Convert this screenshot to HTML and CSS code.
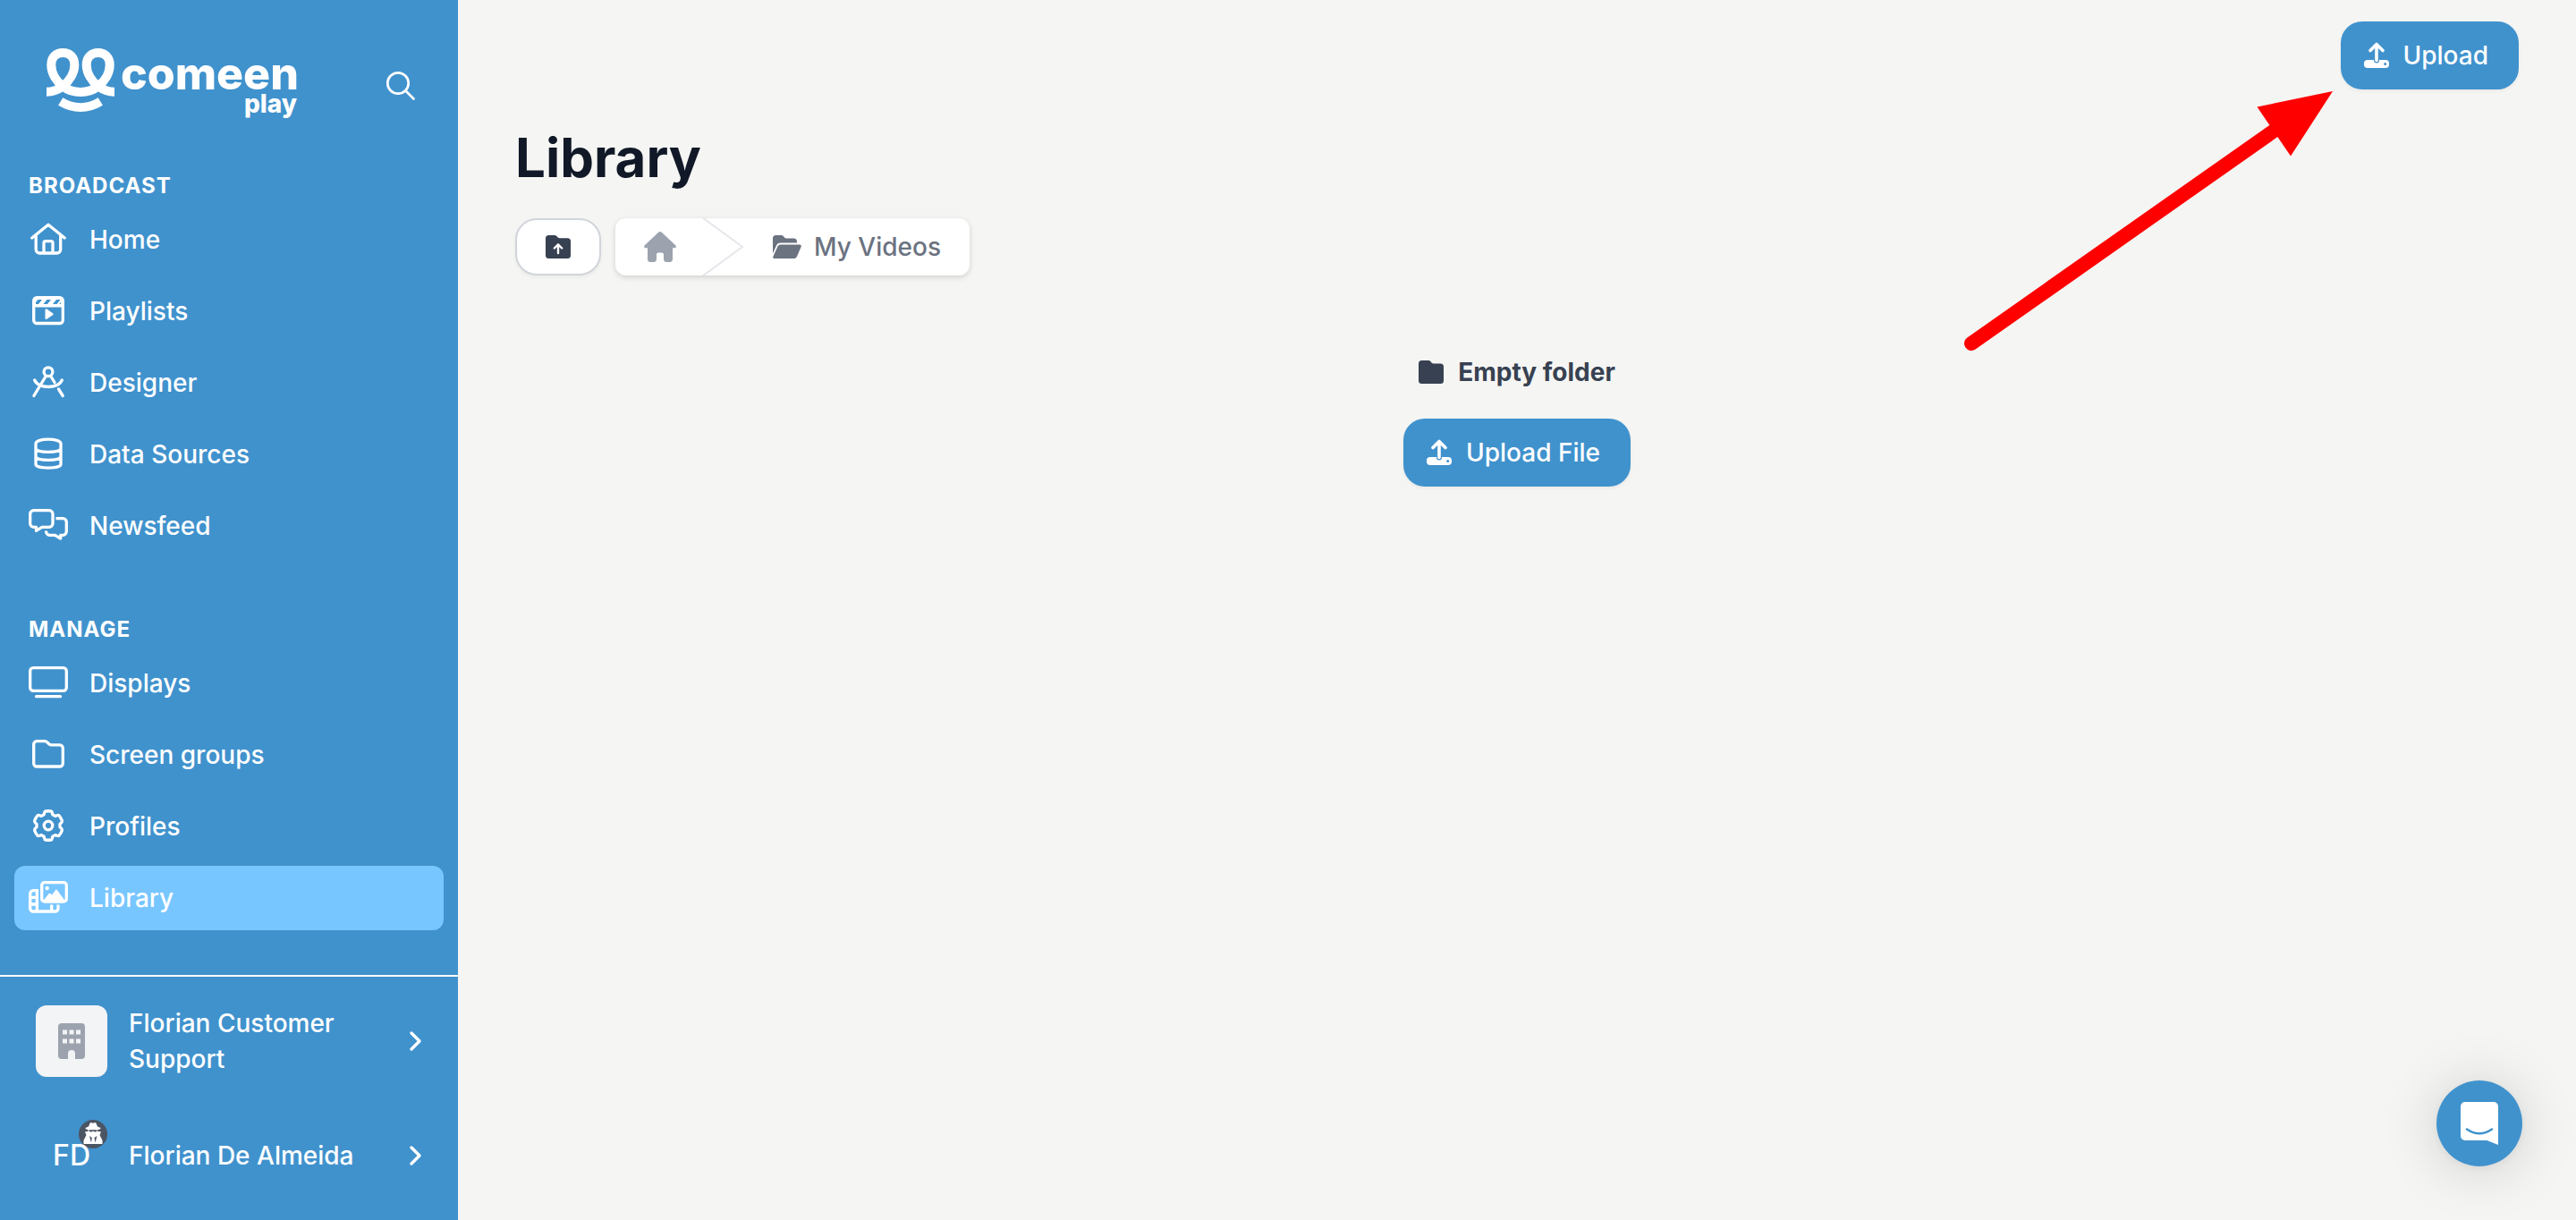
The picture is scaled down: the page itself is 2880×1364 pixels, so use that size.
FILE: index.html
```html
<!DOCTYPE html>
<html lang="en">
<head>
    <meta charset="UTF-8">
    <meta name="viewport" content="width=device-width, initial-scale=1.0">
    <title>Library - Comeen Play</title>
    <link rel="stylesheet" href="styles.css">
</head>
<body>
    <aside class="sidebar">
        <div class="sidebar-header">
            <a href="#" class="logo" aria-label="Comeen Play">
                <svg width="284" height="88" viewBox="52 52 284 88">
                    <g fill="none" stroke="#fff" stroke-width="10">
                        <path d="M52 102.7C58 102.7 64 101 70.3 96.5C77 91 83.3 82 83.3 72.5C83.3 64 78 59 70.3 59S57.3 64 57.3 72.5C57.3 82 63 91 70.3 96.5C76 101 83 103 90 103C97 103 104 101 109.7 96.5C117 91 122.7 82 122.7 72.5C122.7 64 117 59 109.7 59S96.7 64 96.7 72.5C96.7 82 103 91 109.7 96.5C116 101 122 102.7 128 102.7"/>
                        <path d="M67.7 113.5C82 122.2 98 122.2 112.3 113.5"/>
                    </g>
                    <text class="logo-name" x="135" y="100">comeen</text>
                    <text class="logo-product" x="332" y="126" text-anchor="end">play</text>
                </svg>
            </a>
            <button class="search-button" aria-label="Search">
                <svg width="32" height="32" viewBox="0 0 32 32" fill="none" stroke="#fff" stroke-width="2.7" stroke-linecap="round">
                    <circle cx="13" cy="13" r="11.7"/>
                    <path d="M21.5 21.5L30.5 30.5"/>
                </svg>
            </button>
        </div>

        <nav class="nav-group">
            <h2>Broadcast</h2>
            <a href="#" class="nav-item">
                <svg class="nav-icon" viewBox="0 0 44 38">
                    <path d="M3.8 17L22 2.2L40.2 17M8.2 14V30a4 4 0 0 0 4 4H31.7a4 4 0 0 0 4-4V14M17 34V22.6a2 2 0 0 1 2-2H25a2 2 0 0 1 2 2V34"/>
                </svg>
                Home
            </a>
            <a href="#" class="nav-item">
                <svg class="nav-icon" viewBox="0 0 44 38">
                    <rect x="5.7" y="3.7" width="32.6" height="28.8" rx="3.5"/>
                    <path class="solid" fill-rule="evenodd" d="M5 4H39V14.5H5ZM8 11V9L10.5 6H15L11 11ZM16.5 11L20.5 6H25L21 11ZM27 11L31 6H35.5L31.5 11ZM34.5 11L36.2 8.5V11Z"/>
                    <path class="solid" d="M18.5 17.5a1.2 1.2 0 0 1 1.9-1L27 21.2a1.2 1.2 0 0 1 0 2L20.4 27.8a1.2 1.2 0 0 1-1.9-1Z"/>
                </svg>
                Playlists
            </a>
            <a href="#" class="nav-item">
                <svg class="nav-icon" viewBox="0 0 44 38">
                    <circle cx="22" cy="6.7" r="4.9"/>
                    <path d="M19 12L5.9 33.5M25 12L29 18.5M33.5 26L38.2 33.5M6.7 16C11 26 33 26 37.3 16"/>
                </svg>
                Designer
            </a>
            <a href="#" class="nav-item">
                <svg class="nav-icon" viewBox="0 0 44 38">
                    <path d="M8 7C8 .5 36 .5 36 7V30C36 35.4 8 35.4 8 30ZM8 13C11 17.4 33 17.4 36 13M8 22C11 26.4 33 26.4 36 22"/>
                </svg>
                Data Sources
            </a>
            <a href="#" class="nav-item">
                <svg class="nav-icon" viewBox="0 0 44 38">
                    <path d="M5.7 1.7H23a4 4 0 0 1 4 4V16.3a4 4 0 0 1-4 4H15L8.5 24.3V20.3H5.7a4 4 0 0 1-4-4V5.7a4 4 0 0 1 4-4Z"/>
                    <path stroke-linecap="butt" d="M30.5 10.7H38.3a4 4 0 0 1 4 4V25.3a4 4 0 0 1-4 4H35.7V33L29.5 29.3H23.5a4 4 0 0 1-4-4V24.5"/>
                </svg>
                Newsfeed
            </a>
        </nav>

        <nav class="nav-group">
            <h2>Manage</h2>
            <a href="#" class="nav-item">
                <svg class="nav-icon" viewBox="0 0 44 38">
                    <rect x="1.7" y="1.7" width="40.6" height="25.6" rx="3.5"/>
                    <path d="M8.5 33.7H35.5"/>
                </svg>
                Displays
            </a>
            <a href="#" class="nav-item">
                <svg class="nav-icon" viewBox="0 0 44 38">
                    <path d="M9.2 3.7H18a4 4 0 0 1 2.8 1.2L22.5 6.7a4 4 0 0 0 2.8 1.2H34.8a3.5 3.5 0 0 1 3.5 3.5V28.5a3.5 3.5 0 0 1-3.5 3.5H9.2a3.5 3.5 0 0 1-3.5-3.5V7.2a3.5 3.5 0 0 1 3.5-3.5Z"/>
                </svg>
                Screen groups
            </a>
            <a href="#" class="nav-item">
                <svg class="nav-icon" viewBox="0 0 44 38">
                    <g transform="translate(22 18)">
                        <circle r="4.8"/>
                        <path d="M-3-16Q0-16.5 3-16Q4.2-15.8 4.4-14L4.8-12.3L7.8-10.6L9.5-11.2Q11.3-11.9 12.2-11Q14.2-8.5 15.3-5.6Q15.7-4.5 14.5-3.2L13-1.7V1.7L14.5 3.2Q15.7 4.5 15.3 5.6Q14.2 8.5 12.2 11Q11.3 11.9 9.5 11.2L7.8 10.6L4.8 12.3L4.4 14Q4.2 15.8 3 16Q0 16.5-3 16Q-4.2 15.8-4.4 14L-4.8 12.3L-7.8 10.6L-9.5 11.2Q-11.3 11.9-12.2 11Q-14.2 8.5-15.3 5.6Q-15.7 4.5-14.5 3.2L-13 1.7V-1.7L-14.5-3.2Q-15.7-4.5-15.3-5.6Q-14.2-8.5-12.2-11Q-11.3-11.9-9.5-11.2L-7.8-10.6L-4.8-12.3L-4.4-14Q-4.2-15.8-3-16Z"/>
                    </g>
                </svg>
                Profiles
            </a>
            <a href="#" class="nav-item active">
                <svg class="nav-icon" viewBox="0 0 44 38">
                    <rect x="14.7" y="1.7" width="27.6" height="21.3" rx="3"/>
                    <circle class="solid" cx="20.7" cy="8" r="2.2"/>
                    <path class="solid" d="M16 22.5L22.5 14.3Q23.7 13 24.8 14.3L26 15.7L30 10.2Q31 9 32 10.2L41 22.5Z"/>
                    <path stroke-linecap="butt" d="M11 10.7H5.2a3.5 3.5 0 0 0-3.5 3.5V30.5a3.5 3.5 0 0 0 3.5 3.5H29.5a3.5 3.5 0 0 0 3.5-3.5V26.5M9.4 10V34M2 18.3H9.4M2 26H9.4M25.7 26.5V34"/>
                </svg>
                Library
            </a>
        </nav>

        <div class="sidebar-footer">
            <a href="#" class="account">
                <span class="avatar avatar-org">
                    <svg width="30" height="40" viewBox="0 0 30 40">
                        <path fill="#9ca3af" fill-rule="evenodd" d="M4 0H26a4 4 0 0 1 4 4V36a4 4 0 0 1-4 4H19V34a4 4 0 0 0-8 0V40H4a4 4 0 0 1-4-4V4a4 4 0 0 1 4-4ZM5 7.5V12.5H10V7.5ZM12.5 7.5V12.5H17.5V7.5ZM20 7.5V12.5H25V7.5ZM5 17.5V22.5H10V17.5ZM12.5 17.5V22.5H17.5V17.5ZM20 17.5V22.5H25V17.5Z"/>
                    </svg>
                </span>
                <span class="account-name">Florian Customer Support</span>
                <svg class="chevron" viewBox="0 0 14 22"><path d="M2 2L11 11L2 20"/></svg>
            </a>
            <a href="#" class="account">
                <span class="avatar">
                    <span class="badge">
                        <svg width="32" height="32" viewBox="0 0 32 32">
                            <path fill="#fff" d="M11 7.5L12.5 4Q13 2.8 14.3 3.2L16 3.7L17.7 3.2Q19 2.8 19.5 4L21 7.5L24.5 9Q25 10 23 10.7L21.5 11.2H10.5L9 10.7Q7 10 7.5 9Z"/>
                            <path fill="#fff" d="M10.5 11H21V13H24.5Q25 14 23.5 17L26.5 23V27H5.5V23L8.5 17Q7 14 7.5 13H10.5Z"/>
                            <path fill="#4b5563" d="M11.5 11.3H20.5V12.5Q18.5 14.2 16.5 12.7H15.5Q13.5 14.2 11.5 12.5ZM12 18L14.8 20L14 25.5ZM20.5 18L17.5 20L18.5 25.5Z"/>
                        </svg>
                    </span>
                    <span class="initials">FD</span>
                </span>
                <span class="account-name">Florian De Almeida</span>
                <svg class="chevron" viewBox="0 0 14 22"><path d="M2 2L11 11L2 20"/></svg>
            </a>
        </div>
    </aside>

    <main>
        <div class="actions">
            <button class="primary-button">
                <svg class="upload-icon" viewBox="0 0 28 30">
                    <rect x="0" y="20" width="28" height="9" rx="4" fill="#fff"/>
                    <circle cx="23.7" cy="24.5" r="1.5" fill="#4092cd"/>
                    <path d="M14 16V20.5" fill="none" stroke="#4092cd" stroke-width="6" stroke-linecap="round"/>
                    <path d="M14 3V20.5M7 9.5L14 2.5L21 9.5" fill="none" stroke="#fff" stroke-width="3.6" stroke-linecap="round" stroke-linejoin="round"/>
                </svg>
                Upload
            </button>
        </div>

        <h1>Library</h1>

        <div class="toolbar">
            <button class="up-button" aria-label="Parent folder">
                <svg width="28" height="26" viewBox="0 0 28 26">
                    <path fill="#374151" d="M3.5 0H10a3 3 0 0 1 2.3 1L13.5 2.3a3 3 0 0 0 2.3 1H24.5A3.5 3.5 0 0 1 28 6.8V22.5A3.5 3.5 0 0 1 24.5 26H3.5A3.5 3.5 0 0 1 0 22.5V3.5A3.5 3.5 0 0 1 3.5 0Z"/>
                    <path d="M14 20V11M9.8 14.5L14 10.3L18.2 14.5" fill="none" stroke="#fff" stroke-width="2.4" stroke-linecap="round" stroke-linejoin="round"/>
                </svg>
            </button>
            <nav class="breadcrumb" aria-label="Breadcrumb">
                <a href="#" class="crumb-home" aria-label="Root folder">
                    <svg width="36" height="34" viewBox="0 0 36 34">
                        <path fill="#9ca3af" d="M18 0Q19 0 19.8 .7L35.3 15.2Q36.5 16.5 35.5 17.8Q35 18.3 34 18.3H32V30.5A3.5 3.5 0 0 1 28.5 34H25.5A3.5 3.5 0 0 1 22 30.5V25.5A2 2 0 0 0 20 23.5H16A2 2 0 0 0 14 25.5V30.5A3.5 3.5 0 0 1 10.5 34H7.5A3.5 3.5 0 0 1 4 30.5V18.3H2Q1 18.3 .5 17.8Q-.5 16.5 .7 15.2L16.2 .7Q17 0 18 0Z"/>
                    </svg>
                </a>
                <svg class="crumb-separator" viewBox="0 0 48 64"><path d="M1 -1L46 32L1 65"/></svg>
                <a href="#" class="crumb">
                    <svg width="32" height="26" viewBox="0 0 32 26">
                        <path fill="#6b7280" d="M3.5 0H9.5a3 3 0 0 1 2.3 1L13 2.5a3 3 0 0 0 2.3 1H23.5A3.3 3.3 0 0 1 27 7V8.5H8.5A5 5 0 0 0 4 11.5L0 20.5V3.5A3.5 3.5 0 0 1 3.5 0Z"/>
                        <path fill="#6b7280" d="M8.5 10.5H30Q32.5 10.7 31.6 13L27 23.8Q26 26 24 26H1.5Q-.5 25.7 .5 23.5L5.5 12.5Q6.5 10.5 8.5 10.5Z"/>
                    </svg>
                    My Videos
                </a>
            </nav>
        </div>

        <section class="empty-folder">
            <p>
                <svg width="28" height="26" viewBox="0 0 28 26">
                    <path fill="#374151" d="M3.5 0H11a3 3 0 0 1 2.3 1L14.5 2.5a3 3 0 0 0 2.3 1H24.5A3.5 3.5 0 0 1 28 7V22.5A3.5 3.5 0 0 1 24.5 26H3.5A3.5 3.5 0 0 1 0 22.5V3.5A3.5 3.5 0 0 1 3.5 0Z"/>
                </svg>
                Empty folder
            </p>
            <button class="primary-button">
                <svg class="upload-icon" viewBox="0 0 28 30">
                    <rect x="0" y="20" width="28" height="9" rx="4" fill="#fff"/>
                    <circle cx="23.7" cy="24.5" r="1.5" fill="#4092cd"/>
                    <path d="M14 16V20.5" fill="none" stroke="#4092cd" stroke-width="6" stroke-linecap="round"/>
                    <path d="M14 3V20.5M7 9.5L14 2.5L21 9.5" fill="none" stroke="#fff" stroke-width="3.6" stroke-linecap="round" stroke-linejoin="round"/>
                </svg>
                Upload File
            </button>
        </section>
    </main>

    <!-- arrow pointing at the upload button -->
    <svg class="arrow" viewBox="0 0 420 300">
        <path d="M12 286L352 47" stroke="#f00" stroke-width="16" stroke-linecap="round"/>
        <path fill="#f00" d="M416 4L331.5 21.5L369 76.5Z"/>
    </svg>

    <button class="chat-button" aria-label="Open chat">
        <svg width="42" height="48" viewBox="0 0 42 48">
            <path fill="#fff" d="M5 0H37a5 5 0 0 1 5 5V48L29.5 43H5a5 5 0 0 1-5-5V5a5 5 0 0 1 5-5Z"/>
            <path d="M7 30.5Q21 40 35 30.5" fill="none" stroke="#4092cd" stroke-width="2.6" stroke-linecap="round"/>
        </svg>
    </button>
</body>
</html>
```

FILE: styles.css
```css
* {
    box-sizing: border-box;
}
body {
    font-family: 'Inter', sans-serif;
    font-size: 28px;
    line-height: 40px;
    font-weight: 500;
    background-color: #f5f5f3;
    color: #374151;
    margin: 0;
    display: flex;
    min-height: 100vh;
    position: relative;
}
a {
    color: inherit;
    text-decoration: none;
}
button {
    font: inherit;
    border: none;
    padding: 0;
    cursor: pointer;
}
svg {
    display: block;
    flex-shrink: 0;
    overflow: visible;
}

/* sidebar */
.sidebar {
    width: 512px;
    flex-shrink: 0;
    display: flex;
    flex-direction: column;
    background-color: #4092cd;
    color: #fff;
}
.sidebar-header {
    display: flex;
    align-items: center;
    justify-content: space-between;
    padding: 52px 48px 52px 52px;
}
.logo-name, .logo-product {
    font-weight: 800;
    fill: #fff;
}
.logo-name {
    font-size: 50px;
}
.logo-product {
    font-size: 28px;
}
.search-button {
    background: none;
}
.nav-group {
    display: flex;
    flex-direction: column;
    gap: 8px;
    padding: 0 16px;
}
.nav-group + .nav-group {
    margin-top: 64px;
}
.nav-group h2 {
    margin: 0;
    padding: 0 16px;
    font-size: 24px;
    line-height: 32px;
    font-weight: 700;
    letter-spacing: 1px;
    text-transform: uppercase;
}
.nav-item {
    display: flex;
    align-items: center;
    gap: 24px;
    padding: 16px;
    border-radius: 12px;
}
.nav-item.active {
    background-color: #78c6ff;
}
.nav-icon {
    width: 44px;
    height: 38px;
    fill: none;
    stroke: #fff;
    stroke-width: 3.3;
    stroke-linecap: round;
    stroke-linejoin: round;
}
.nav-icon .solid {
    fill: #fff;
    stroke: none;
}
.sidebar-footer {
    display: flex;
    flex-direction: column;
    gap: 48px;
    margin-top: auto;
    padding: 32px 40px;
    border-top: 2px solid #fff;
}
.account {
    display: flex;
    align-items: center;
    gap: 24px;
}
.account-name {
    flex: 1;
}
.avatar {
    position: relative;
    display: flex;
    align-items: center;
    justify-content: center;
    width: 80px;
    height: 80px;
    font-size: 32px;
}
.avatar-org {
    background-color: #f3f4f6;
    border-radius: 12px;
}
.badge {
    position: absolute;
    top: 0;
    right: 0;
    border-radius: 50%;
    background-color: #4b5563;
}
.initials {
    position: relative;
}
.chevron {
    width: 14px;
    height: 22px;
    fill: none;
    stroke: #fff;
    stroke-width: 3.4;
    stroke-linecap: round;
    stroke-linejoin: round;
}

/* content */
main {
    flex: 1;
    padding: 24px 64px;
}
.actions {
    display: flex;
    justify-content: flex-end;
}
.primary-button {
    display: flex;
    align-items: center;
    gap: 16px;
    padding: 18px 34px 18px 26px;
    border-radius: 24px;
    background-color: #4092cd;
    color: #fff;
    box-shadow: 0 2px 4px rgba(0, 0, 0, 0.05);
}
.upload-icon {
    width: 28px;
    height: 30px;
}
h1 {
    margin: 40px 0 32px;
    font-size: 60px;
    line-height: 72px;
    font-weight: 700;
    color: #111827;
}
.toolbar {
    display: flex;
    gap: 16px;
}
.up-button {
    display: flex;
    align-items: center;
    justify-content: center;
    width: 96px;
    height: 64px;
    background-color: #fff;
    border: 2px solid #d1d5db;
    border-radius: 24px;
    box-shadow: 0 2px 4px rgba(0, 0, 0, 0.05);
}
.breadcrumb {
    display: flex;
    align-items: center;
    height: 64px;
    padding: 0 32px;
    background-color: #fff;
    border-radius: 12px;
    box-shadow: 0 2px 6px rgba(0, 0, 0, 0.15);
    color: #6b7280;
}
.crumb-separator {
    width: 48px;
    height: 64px;
    margin: 0 32px 0 28px;
    fill: none;
    stroke: #e5e7eb;
    stroke-width: 2;
    overflow: hidden;
}
.crumb {
    display: flex;
    align-items: center;
    gap: 14px;
}
.empty-folder {
    display: flex;
    flex-direction: column;
    align-items: center;
    gap: 32px;
    margin-top: 88px;
}
.empty-folder p {
    display: flex;
    align-items: center;
    gap: 16px;
    margin: 0;
    font-weight: 700;
}

/* overlays */
.arrow {
    position: absolute;
    top: 98px;
    right: 268px;
    width: 420px;
    height: 300px;
    pointer-events: none;
}
.chat-button {
    position: fixed;
    right: 60px;
    bottom: 60px;
    display: flex;
    align-items: center;
    justify-content: center;
    width: 96px;
    height: 96px;
    border-radius: 50%;
    background-color: #4092cd;
    box-shadow: 0 2px 12px rgba(0, 0, 0, 0.06), 0 4px 64px rgba(0, 0, 0, 0.16);
}
```
